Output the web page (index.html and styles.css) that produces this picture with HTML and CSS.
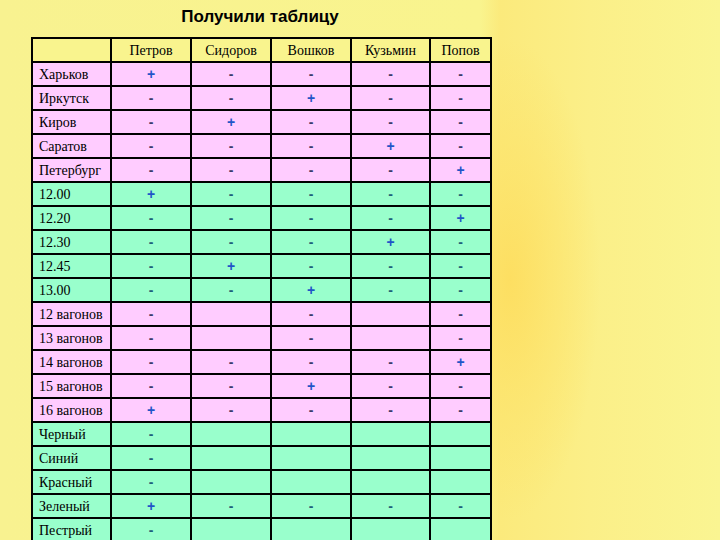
FILE: index.html
```html
<!DOCTYPE html>
<html>
<head>
<meta charset="utf-8">
<link rel="stylesheet" href="styles.css">
</head>
<body>
<div class="wrap">
  <h1 class="title">Получили таблицу</h1>
  <table class="grid">
    <colgroup>
      <col class="c0"><col class="c1"><col class="c1"><col class="c1"><col class="c4"><col class="c5">
    </colgroup>
    <tr class="head"><th></th><th>Петров</th><th>Сидоров</th><th>Вошков</th><th>Кузьмин</th><th>Попов</th></tr>
    <tr class="pink"><td>Харьков</td><td class="p">+</td><td class="m">-</td><td class="m">-</td><td class="m">-</td><td class="m">-</td></tr>
    <tr class="pink"><td>Иркутск</td><td class="m">-</td><td class="m">-</td><td class="p">+</td><td class="m">-</td><td class="m">-</td></tr>
    <tr class="pink"><td>Киров</td><td class="m">-</td><td class="p">+</td><td class="m">-</td><td class="m">-</td><td class="m">-</td></tr>
    <tr class="pink"><td>Саратов</td><td class="m">-</td><td class="m">-</td><td class="m">-</td><td class="p">+</td><td class="m">-</td></tr>
    <tr class="pink"><td>Петербург</td><td class="m">-</td><td class="m">-</td><td class="m">-</td><td class="m">-</td><td class="p">+</td></tr>
    <tr class="green"><td>12.00</td><td class="p">+</td><td class="m">-</td><td class="m">-</td><td class="m">-</td><td class="m">-</td></tr>
    <tr class="green"><td>12.20</td><td class="m">-</td><td class="m">-</td><td class="m">-</td><td class="m">-</td><td class="p">+</td></tr>
    <tr class="green"><td>12.30</td><td class="m">-</td><td class="m">-</td><td class="m">-</td><td class="p">+</td><td class="m">-</td></tr>
    <tr class="green"><td>12.45</td><td class="m">-</td><td class="p">+</td><td class="m">-</td><td class="m">-</td><td class="m">-</td></tr>
    <tr class="green"><td>13.00</td><td class="m">-</td><td class="m">-</td><td class="p">+</td><td class="m">-</td><td class="m">-</td></tr>
    <tr class="pink"><td>12 вагонов</td><td class="m">-</td><td></td><td class="m">-</td><td></td><td class="m">-</td></tr>
    <tr class="pink"><td>13 вагонов</td><td class="m">-</td><td></td><td class="m">-</td><td></td><td class="m">-</td></tr>
    <tr class="pink"><td>14 вагонов</td><td class="m">-</td><td class="m">-</td><td class="m">-</td><td class="m">-</td><td class="p">+</td></tr>
    <tr class="pink"><td>15 вагонов</td><td class="m">-</td><td class="m">-</td><td class="p">+</td><td class="m">-</td><td class="m">-</td></tr>
    <tr class="pink"><td>16 вагонов</td><td class="p">+</td><td class="m">-</td><td class="m">-</td><td class="m">-</td><td class="m">-</td></tr>
    <tr class="green"><td>Черный</td><td class="m">-</td><td></td><td></td><td></td><td></td></tr>
    <tr class="green"><td>Синий</td><td class="m">-</td><td></td><td></td><td></td><td></td></tr>
    <tr class="green"><td>Красный</td><td class="m">-</td><td></td><td></td><td></td><td></td></tr>
    <tr class="green"><td>Зеленый</td><td class="p">+</td><td class="m">-</td><td class="m">-</td><td class="m">-</td><td class="m">-</td></tr>
    <tr class="green"><td>Пестрый</td><td class="m">-</td><td></td><td></td><td></td><td></td></tr>
  </table>
</div>
</body>
</html>
```
FILE: styles.css
```css
html, body {
  margin: 0;
  padding: 0;
  height: 540px;
  overflow: hidden;
}
body {
  background-color: #f9f48e;
  background-image:
    radial-gradient(ellipse 90px 240px at 510px 280px, rgba(253, 222, 96, 0.95) 0%, rgba(253, 226, 104, 0.65) 45%, rgba(249, 244, 142, 0) 100%),
    linear-gradient(to right, #f8f290 0px, #f9f48e 480px, #fbea7c 500px, #fbef88 590px, #faf592 720px);
}
.wrap {
  width: 458px;
  margin-left: 31px;
  padding-top: 7px;
}
.title {
  margin: 0 0 10px 0;
  height: 20px;
  font-family: "Liberation Sans", Arial, sans-serif;
  font-weight: bold;
  font-size: 17px;
  line-height: 20px;
  text-align: center;
  color: #000;
}
.grid {
  border-collapse: collapse;
  table-layout: fixed;
  width: 459px;
  font-family: "Liberation Serif", "Times New Roman", serif;
  font-size: 14px;
  color: #000;
}
.c0 { width: 79px; }
.c1 { width: 80px; }
.c4 { width: 79px; }
.c5 { width: 61px; }
.grid th, .grid td {
  border: 2px solid #000;
  height: 21px;
  padding: 1px 0 0 0;
  line-height: 21px;
  box-sizing: content-box;
}
.grid th {
  font-weight: normal;
  text-align: center;
  background: #f9f48e;
}
.grid td:first-child {
  text-align: left;
  padding-left: 6px;
}
.grid td.p, .grid td.m {
  text-align: center;
  font-family: "Liberation Sans", Arial, sans-serif;
  font-weight: bold;
  font-size: 14px;
}
.grid td.p { color: #1f55c8; }
.pink td { background: #ffccff; }
.green td { background: #99ffcc; }
.pink td.m { color: #3a3a6a; }
.green td.m { color: #1f5f7a; }
```
